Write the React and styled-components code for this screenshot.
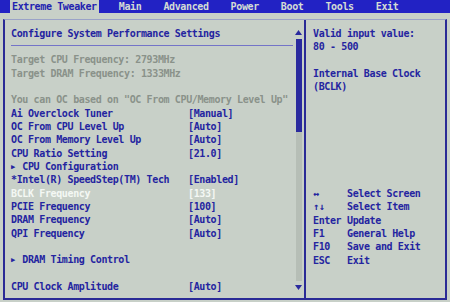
import React from "react";
import styled, { createGlobalStyle } from "styled-components";

const Global = createGlobalStyle`
  html, body {
    margin: 0;
    padding: 0;
    background: #c8d0c8;
  }
  body {
    width: 450px;
    height: 302px;
    overflow: hidden;
    font-family: "DejaVu Sans Mono", "Liberation Mono", monospace;
    font-size: 10px;
    font-weight: bold;
    letter-spacing: -0.37px;
  }
`;

const Screen = styled.div`
  width: 450px;
  height: 302px;
  display: flex;
  flex-direction: column;
  background: #c8d0c8;
`;

const MenuBar = styled.div`
  height: 13px;
  background: #2222c4;
  display: flex;
  align-items: stretch;
  padding-left: 10px;
  gap: 18px;
`;

const MenuItem = styled.div`
  padding: 0 2px;
  line-height: 13px;
  color: ${(p) => (p.$active ? "#2222b0" : "#d4dcd4")};
  background: ${(p) => (p.$active ? "#c8d0c8" : "transparent")};
`;

const Frame = styled.div`
  margin: 6px 3px 0 3px;
  height: 281px;
  box-sizing: border-box;
  border: 2px solid #2a2a96;
  border-top: 1px solid #9aa2c8;
  display: flex;
`;

const LeftPanel = styled.div`
  width: 301px;
  display: flex;
  border-right: 2px solid #2a2a96;
  box-sizing: border-box;
`;

const LeftContent = styled.div`
  flex: 1;
  padding: 7px 0 0 6px;
  display: flex;
  flex-direction: column;
`;

const Title = styled.div`
  line-height: 13.33px;
  color: #2424a0;
  padding-bottom: 5px;
  border-bottom: 1px solid #7474c8;
  margin-right: 2px;
`;

const Rows = styled.div`
  margin-top: 7px;
  display: flex;
  flex-direction: column;
`;

const Row = styled.div`
  height: 13.33px;
  line-height: 13.33px;
  display: grid;
  grid-template-columns: 177px auto;
  white-space: pre;
  color: ${(p) =>
    p.$tone === "muted" ? "#8a928a" : p.$tone === "sel" ? "#f4f8f4" : "#2424a0"};
`;

const Wide = styled.span`
  grid-column: 1 / 3;
`;

const Arrow = styled.span`
  display: inline-block;
  width: 11.3px;
  font-size: 7px;
  vertical-align: 1px;
`;

const ScrollBar = styled.div`
  width: 7px;
  margin-right: 2px;
  padding-top: 10px;
  padding-bottom: 8px;
  display: flex;
  flex-direction: column;
  align-items: center;
`;

const ScrollArrow = styled.svg`
  width: 7px;
  height: 5px;
  flex: none;
`;

const Track = styled.div`
  flex: 1;
  width: 6px;
  margin: 4px 0;
  background: #b6beb6;
  display: flex;
  flex-direction: column;
`;

const Thumb = styled.div`
  height: 93px;
  background: #2a2a9e;
`;

const RightPanel = styled.div`
  flex: 1;
  padding: 7px 0 0 7px;
  color: #2424a0;
  display: flex;
  flex-direction: column;
`;

const HelpLine = styled.div`
  height: 13.33px;
  line-height: 13.33px;
  white-space: pre;
`;

const Keys = styled.div`
  margin-top: 93.3px;
  display: grid;
  grid-template-columns: 34px auto;
  grid-auto-rows: 13.33px;
  line-height: 13.33px;
  white-space: pre;
`;

const menus = ["Extreme Tweaker", "Main", "Advanced", "Power", "Boot", "Tools", "Exit"];

const rows = [
  { label: "Target CPU Frequency: 2793MHz", tone: "muted" },
  { label: "Target DRAM Frequency: 1333MHz", tone: "muted" },
  { label: "" },
  { label: 'You can OC based on "OC From CPU/Memory Level Up"', tone: "muted", span: true },
  { label: "Ai Overclock Tuner", value: "[Manual]" },
  { label: "OC From CPU Level Up", value: "[Auto]" },
  { label: "OC From Memory Level Up", value: "[Auto]" },
  { label: "CPU Ratio Setting", value: "[21.0]" },
  { label: "CPU Configuration", sub: true },
  { label: "*Intel(R) SpeedStep(TM) Tech", value: "[Enabled]" },
  { label: "BCLK Frequency", value: "[133]", tone: "sel" },
  { label: "PCIE Frequency", value: "[100]" },
  { label: "DRAM Frequency", value: "[Auto]" },
  { label: "QPI Frequency", value: "[Auto]" },
  { label: "" },
  { label: "DRAM Timing Control", sub: true },
  { label: "" },
  { label: "CPU Clock Amplitude", value: "[Auto]" },
];

const keys = [
  ["↔", "Select Screen"],
  ["↑↓", "Select Item"],
  ["Enter", "Update"],
  ["F1", "General Help"],
  ["F10", "Save and Exit"],
  ["ESC", "Exit"],
];

export default function App() {
  return (
    <Screen>
      <Global />
      <MenuBar>
        {menus.map((m, i) => (
          <MenuItem key={m} $active={i === 0}>
            {m}
          </MenuItem>
        ))}
      </MenuBar>
      <Frame>
        <LeftPanel>
          <LeftContent>
            <Title>Configure System Performance Settings</Title>
            <Rows>
              {rows.map((r, i) => (
                <Row key={i} $tone={r.tone}>
                  {r.span ? (
                    <Wide>{r.label}</Wide>
                  ) : (
                    <>
                      <span>
                        {r.sub && <Arrow>▶</Arrow>}
                        {r.label}
                      </span>
                      <span>{r.value || ""}</span>
                    </>
                  )}
                </Row>
              ))}
            </Rows>
          </LeftContent>
          <ScrollBar>
            <ScrollArrow viewBox="0 0 7 5">
              <polygon points="3.5,0 7,5 0,5" fill="#2a2a9e" />
            </ScrollArrow>
            <Track>
              <Thumb />
            </Track>
            <ScrollArrow viewBox="0 0 7 5">
              <polygon points="0,0 7,0 3.5,5" fill="#2a2a9e" />
            </ScrollArrow>
          </ScrollBar>
        </LeftPanel>
        <RightPanel>
          <HelpLine>Valid input value:</HelpLine>
          <HelpLine>80 - 500</HelpLine>
          <HelpLine> </HelpLine>
          <HelpLine>Internal Base Clock</HelpLine>
          <HelpLine>(BCLK)</HelpLine>
          <Keys>
            {keys.map(([k, d]) => (
              <React.Fragment key={k}>
                <span>{k}</span>
                <span>{d}</span>
              </React.Fragment>
            ))}
          </Keys>
        </RightPanel>
      </Frame>
    </Screen>
  );
}
